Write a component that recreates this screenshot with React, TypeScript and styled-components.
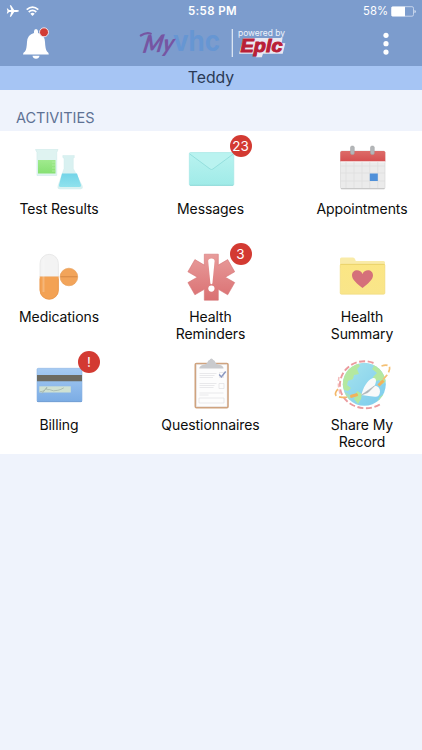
import React from 'react';
import styled, { createGlobalStyle } from 'styled-components';

const GlobalStyle = createGlobalStyle`
  * {
    box-sizing: border-box;
  }

  body {
    margin: 0;
    background: #eff3fc;
    font-family: Inter, 'Liberation Sans', sans-serif;
  }
`;

const Screen = styled.div`
  width: 100%;
  min-height: 750px;
  background: #eff3fc;
`;

const Header = styled.header`
  height: 66px;
  background: #7c9ccd;
  color: white;
`;

const StatusBar = styled.div`
  display: grid;
  grid-template-columns: 1fr auto 1fr;
  align-items: center;
  height: 22px;
  padding: 0 6px;
`;

const StatusIcons = styled.div`
  display: flex;
  align-items: center;
  gap: 6px;
`;

const Clock = styled.div`
  padding-left: 3px;
  font-size: 11.5px;
  font-weight: 600;
  letter-spacing: 0.4px;
`;

const Battery = styled.div`
  display: flex;
  align-items: center;
  justify-content: flex-end;
  gap: 3px;
  font-size: 11.3px;
`;

const NavBar = styled.div`
  display: grid;
  grid-template-columns: 116px 160px 1fr;
  align-items: center;
  height: 44px;
  padding: 0 31px 0 20px;
`;

const IconButton = styled.button`
  display: flex;
  padding: 0;
  border: 0;
  background: none;

  &:last-child {
    justify-self: end;
  }
`;

const PatientBar = styled.div`
  height: 24px;
  background: #a6c5f4;
  color: #2b3a55;
  font-size: 15.8px;
  line-height: 24px;
  text-align: center;
`;

const SectionTitle = styled.h2`
  height: 41px;
  margin: 0;
  padding: 7px 16px 0;
  color: #5e7194;
  font-size: 14.5px;
  font-weight: 400;
  line-height: 41px;
`;

const ActivityGrid = styled.div`
  display: grid;
  grid-template-columns: repeat(3, 118px);
  grid-auto-rows: 108px;
  justify-content: space-between;
  height: 323px;
  padding-right: 1px;
  background: white;
`;

const Activity = styled.div`
  position: relative;
  display: flex;
  flex-direction: column;
  align-items: center;
`;

const Label = styled.div`
  color: #0c0c0c;
  font-size: 14px;
  line-height: 17px;
  letter-spacing: -0.07px;
  text-align: center;
  white-space: pre-line;
`;

const Badge = styled.span`
  position: absolute;
  top: 4px;
  left: 78px;
  width: 22px;
  height: 22px;
  border-radius: 50%;
  background: #d33a32;
  color: white;
  font-size: 13.5px;
  line-height: 23px;
  text-align: center;
`;

const Art: React.FC<{ children: React.ReactNode }> = ({ children }) => (
  <svg width="80" height="69" viewBox="0 0 80 69" fill="none">
    {children}
  </svg>
);

const Gradient: React.FC<{ id: string; from: string; to: string }> = ({ id, from, to }) => (
  <linearGradient id={id} x1="0" y1="0" x2="0" y2="1">
    <stop stopColor={from} />
    <stop offset="1" stopColor={to} />
  </linearGradient>
);

const TestResultsArt = () => (
  <Art>
    <Gradient id="green" from="#a0ea8e" to="#86e072" />
    <Gradient id="aqua" from="#72d4e8" to="#90e2ed" />
    <path d="M16.500 18.500h22.500l-1.300 3v23H18V21.500z" fill="#dff3f1" stroke="#d3eceb" strokeWidth=".7" />
    <path d="M19 29h17.500v13.500H19z" fill="url(#green)" />
    <path d="M33 31h3M33 34h3M33 37h3M33 40h3" stroke="#b7efab" strokeWidth=".7" />
    <path d="M43.800 24.500h11.500v2l-1 1v10l9 17.500q1 3-2 3H41q-3 0-2-3l6-17.500V27.500l-1.200-1z" fill="#d9f1f1" stroke="#d0ecec" strokeWidth=".5" />
    <path d="M43 42.500h15l4 11.500q.5 2-1.500 2h-19q-2 0-1.500-2z" fill="url(#aqua)" />
  </Art>
);

const MessagesArt = () => (
  <Art>
    <Gradient id="mail" from="#b9f3f0" to="#a0ebe8" />
    <rect x="18.300" y="21.500" width="44.500" height="33" rx="1.300" fill="url(#mail)" stroke="#a0e4e3" strokeWidth=".6" />
    <path d="M18.800 23l20.300 15q1.400 1 2.800 0L62.300 23" fill="#baf3f0" stroke="#8bdbd9" strokeWidth=".8" />
    <path d="M19 54.300h43" stroke="#8ad5d6" strokeWidth=".8" />
  </Art>
);

const AppointmentsArt = () => (
  <Art>
    <Gradient id="red" from="#dc6c69" to="#d64f50" />
    <rect x="18.500" y="20" width="44.500" height="38" rx="1.500" fill="#ebebeb" stroke="#d3d3d3" strokeWidth=".6" />
    <path d="M18.300 30.500V21.500q0-1.500 1.500-1.500h42q1.500 0 1.500 1.500v9z" fill="url(#red)" />
    <path d="M18.500 30.900h44.500" stroke="#fff" strokeWidth=".8" />
    <path d="M18.500 35h44.500M18.500 42h44.500M18.500 50h44.500M24 31v26M32 31v26M40 31v26M47.700 31v26M55.700 31v26" stroke="#dcdcdc" strokeWidth=".7" />
    <path d="M19 57.600h43.500" stroke="#bdbdbd" strokeWidth=".8" />
    <rect x="47.800" y="42.500" width="8" height="7.500" fill="#4f90d9" />
    <rect x="28.500" y="15" width="3.800" height="8.500" rx="1.500" fill="#b3b6b8" stroke="#a0a3a5" strokeWidth=".5" />
    <rect x="48.500" y="15" width="3.800" height="8.500" rx="1.500" fill="#b3b6b8" stroke="#a0a3a5" strokeWidth=".5" />
  </Art>
);

const MedicationsArt = () => (
  <Art>
    <path d="M21 38V24.500a9.200 9.200 0 0 1 18.400 0V38z" fill="#f3f3f3" stroke="#e2e2e2" strokeWidth=".7" />
    <path d="M20.700 37.500h19V51a9.500 9.500 0 0 1-19 0z" fill="#f3a254" />
    <path d="M21 39.500V51a9.200 9.200 0 0 0 18.400 0V39.500" stroke="#e8974a" strokeWidth=".7" />
    <path d="M24.500 20v33" stroke="#fff" strokeWidth="2" opacity=".22" />
    <circle cx="49.900" cy="38" r="8.800" fill="#f2a45a" stroke="#e69a52" strokeWidth=".6" />
    <path d="M41.500 37.700h16.800" stroke="#dc8f4a" strokeWidth="1.300" />
  </Art>
);

const RemindersArt = () => (
  <Art>
    <linearGradient id="star" x1="0" y1="15" x2="0" y2="61" gradientUnits="userSpaceOnUse">
      <stop stopColor="#e89c9b" />
      <stop offset="1" stopColor="#da7072" />
    </linearGradient>
    <path
      d="M33.300 15.200h14v10.900l9.400-5.500 7 12.200-9.400 5.400 9.400 5.400-7 12.200-9.400-5.500v10.900h-14V50.300l-9.400 5.500-7-12.200 9.400-5.400-9.400-5.400 7-12.200 9.400 5.500z"
      fill="url(#star)"
      stroke="#d57376"
      strokeWidth=".6"
    />
    <path d="M37.200 22q0-2.500 3.200-2.500t3.200 2.500l-2.200 22.500q-1 1.500-2 0z" fill="white" />
    <circle cx="40.400" cy="49.600" r="3.100" fill="white" />
  </Art>
);

const SummaryArt = () => (
  <Art>
    <Gradient id="folder" from="#fbe684" to="#f9e58a" />
    <path d="M18 25v-5q0-1.500 1.500-1.500H31q1.500 0 2 1.500l.8 2H61.500q1.500 0 1.500 1.500V29H18z" fill="#f9eba8" />
    <rect x="18.200" y="25.200" width="44.700" height="30" rx="1.300" fill="url(#folder)" stroke="#efd978" strokeWidth=".6" />
    <path d="M18.500 25.500h44" stroke="#ecd56e" strokeWidth="1" />
    <path d="M40.500 49C35.500 45 30 41 30 36.300c0-3 2.300-5 5-5 2.500 0 4.500 1.300 5.500 3.700 1-2.400 3-3.700 5.500-3.700 2.700 0 5 2 5 5C51 41 45.500 45 40.500 49z" fill="#d5707a" />
  </Art>
);

const BillingArt = () => (
  <Art>
    <Gradient id="card" from="#a6cbf3" to="#7bace4" />
    <rect x="18" y="21.300" width="45" height="33.500" rx="1.300" fill="url(#card)" stroke="#8cb4e3" strokeWidth=".6" />
    <path d="M18 28h45v6.200H18z" fill="#6c6b62" />
    <path d="M18 54.500h45" stroke="#6d9bd2" strokeWidth=".8" />
    <rect x="20.300" y="39.300" width="31.500" height="6.200" fill="#cfe1d2" />
    <path d="M20.800 44.700q5 0 7-4.500-1 3 1 2.500t3 .3q2 1.500 7 .3 3-.5 6-2.500M23 46.500l4.500-5.500" stroke="#a5b5aa" strokeWidth=".8" />
  </Art>
);

const QuestionnairesArt = () => (
  <Art>
    <rect x="24.400" y="16.600" width="32.500" height="44" rx="1" fill="#fdfdfd" stroke="#cfa37f" strokeWidth="1.800" />
    <path d="M25.500 17.500h30.500v42H25.500z" stroke="#e6e6e8" strokeWidth=".5" />
    <path d="M28.300 21.500q0-2.500 3.500-3.500 4.500-1 5-3.500.5-1.500 1.800-1.500.5-1.500 1.800-1.500t1.800 1.500q1.300 0 1.800 1.500.5 2.500 5 3.500 3.500 1 3.500 3.500z" fill="#c9cacd" />
    <path d="M28.500 26.500h17M28.500 28.500h15M28.500 30.500h13.500M28.500 36.500h17M28.500 38.500h15M28.500 40.500h14M28.500 46h24M28.500 48h9" stroke="#e3e3e6" strokeWidth=".8" />
    <path d="M48.500 25.500h4v5h-4zM48 36.500h5v5h-5zM28 51h25v5H28z" stroke="#e0e0e3" strokeWidth=".7" />
    <path d="M48.200 27.500l2.200 2.400 4.300-5.400" stroke="#8b98c0" strokeWidth="1.500" />
  </Art>
);

const ShareArt = () => (
  <Art>
    <linearGradient id="sea" x1="0" y1="0" x2="1" y2="1">
      <stop stopColor="#a8e4ed" />
      <stop offset="1" stopColor="#7bcbed" />
    </linearGradient>
    <clipPath id="earth">
      <circle cx="42.300" cy="37.300" r="21.500" />
    </clipPath>
    <circle cx="42.300" cy="37.300" r="21.500" fill="url(#sea)" />
    <g clipPath="url(#earth)" fill="#b4e8a0">
      <path d="M20 37l3-13 12-9 3 4-3 3 2 5-5 1-1 4-5 2-1 4 4 3-3 3-4-1zM48 15l12 7 5 11-4 4-4-4-5 2-1-5 4-4-5-4 2-3zM35 44l5 3-1 5-3 5-4-5zM58 50l6-5-3 9-7 3z" />
      <path d="M23 45l5 3v5l-5-4z" opacity=".6" />
    </g>
    <path d="M51.500 16C38 10.500 23 18 19 31c-4 13 3 23 12.500 27.500 9 4 19 4 28-2" stroke="#eb9a9d" strokeWidth="1.900" strokeDasharray="6 2.600" />
    <path d="M17 30q-1.800 9 1.500 18" stroke="#f4bcbb" strokeWidth="1.500" strokeDasharray="4 2.500" />
    <path d="M59.500 19q6-2 8 .8 1 3-2.500 8.200l-6.500 7.500" stroke="#f4c074" strokeWidth="1.700" strokeDasharray="6 2.500" />
    <path d="M36 47.800q-9 3-16 2.600-6-.6-6.500-3-.5-2 2.500-5.400" stroke="#f3b767" strokeWidth="1.700" strokeDasharray="8 3" />
    <path d="M28.500 49.500l7-2M56.500 38.500l5-5" stroke="#f1b25b" strokeWidth="3" />
    <path d="M39.500 48C41 41 45 33 51 31q3-.7 3 3-.2 2.500-1.300 4.700 5.300.5 5.300 5.800-.3 5.500-5 5.200-6-.7-13.500-1.700z" fill="#f8fafa" />
    <path d="M39.500 48l13.200-9.300L46 45.500z" fill="#a9b2b6" stroke="#b0b9bc" strokeWidth=".6" />
  </Art>
);

const AirplaneIcon = () => (
  <svg width="14" height="14" viewBox="0 0 14 14" fill="white">
    <path d="M13 7q0 .8-2 .9H8.200L5 12.700H3.800L5.300 8H3L1.700 9.500H.8L1.500 7 .8 4.500h.9L3 6h2.300L3.800 1.300H5l3.200 4.800H11q2 .1 2 .9z" />
  </svg>
);

const WifiIcon = () => (
  <svg width="13" height="11" viewBox="0 0 13 11" fill="none" stroke="white" strokeWidth="1.700">
    <path d="M.7 3.700q5.800-5 11.600 0M2.700 6q3.800-3.200 7.600 0" />
    <path d="M4.300 7.700q2.200-1.700 4.400 0l-2.200 2.200z" fill="white" stroke="none" />
  </svg>
);

const BatteryIcon = () => (
  <svg width="25" height="11" viewBox="0 0 25 11">
    <rect x=".5" y=".7" width="22" height="9.500" rx="1.500" fill="none" stroke="#c4d3eb" />
    <path d="M.5 1.500q0-.8.800-.8H14v9.500H1.300q-.8 0-.8-.8z" fill="white" />
    <path d="M23.500 4q1.300 0 1.300 1.500T23.500 7z" fill="#dbe5f5" />
  </svg>
);

const BellIcon = () => (
  <svg width="31" height="34" viewBox="0 0 31 34">
    <path d="M14 4.500q0-2.500 2-2.500t2 2.500V6q6.500 1.500 7 9 .3 7.500 2 9.500 1.800 1 1.800 3H3q0-2 2-3 1.700-2 2-9.500.5-7.500 7-9z" fill="white" />
    <path d="M12.500 28.800h7q-.5 3-3.500 3t-3.500-3z" fill="white" />
    <circle cx="24" cy="5.300" r="4.500" fill="#d23c34" stroke="#f2f4fa" strokeWidth=".9" />
  </svg>
);

const MoreIcon = () => (
  <svg width="10" height="24" viewBox="0 0 10 24" fill="white">
    <circle cx="5" cy="3.300" r="2.600" />
    <circle cx="5" cy="11.700" r="2.600" />
    <circle cx="5" cy="20.100" r="2.600" />
  </svg>
);

const Logo = () => (
  <svg width="160" height="44" viewBox="0 -4 160 44">
    <text x="37" y="25" fontFamily="Inter, sans-serif" fontWeight="700" fontSize="28" textLength="47" lengthAdjust="spacingAndGlyphs" fill="#6696d3">vhc</text>
    <text transform="translate(6 27) rotate(-3) skewX(-14)" fontFamily="Lato, sans-serif" fontStyle="italic" fontWeight="900" fontSize="24" textLength="31" lengthAdjust="spacingAndGlyphs" fill="#7655a2">My</text>
    <path d="M4.800 9.500q5.500-3.500 10-1.800" fill="none" stroke="#7655a2" strokeWidth="2.200" strokeLinecap="round" />
    <path d="M96.300 3v28" stroke="#e5ecf7" strokeWidth="1.200" />
    <text x="102" y="9.500" fontFamily="Inter, sans-serif" fontSize="9" textLength="47" lengthAdjust="spacingAndGlyphs" fill="#eef3fb">powered by</text>
    <path d="M107.500 12h39l-.8 5 3.600.2-2.600 10.500H127l-1.200 3.500h-6l.8-3.500H103z" fill="#e9e9f2" strokeLinejoin="round" />
    <text x="104.500" y="26" fontFamily="'Liberation Sans', sans-serif" fontStyle="italic" fontWeight="700" fontSize="18.500" textLength="42" lengthAdjust="spacingAndGlyphs" fill="#b92037" stroke="#b92037" strokeWidth="1">Epic</text>
  </svg>
);

const activities = [
  { label: 'Test Results', art: <TestResultsArt /> },
  { label: 'Messages', art: <MessagesArt />, badge: '23' },
  { label: 'Appointments', art: <AppointmentsArt /> },
  { label: 'Medications', art: <MedicationsArt /> },
  { label: 'Health\nReminders', art: <RemindersArt />, badge: '3' },
  { label: 'Health\nSummary', art: <SummaryArt /> },
  { label: 'Billing', art: <BillingArt />, badge: '!' },
  { label: 'Questionnaires', art: <QuestionnairesArt /> },
  { label: 'Share My\nRecord', art: <ShareArt /> },
];

const App: React.FC = () => (
  <>
    <GlobalStyle />
    <Screen>
      <Header>
        <StatusBar>
          <StatusIcons>
            <AirplaneIcon />
            <WifiIcon />
          </StatusIcons>
          <Clock>5:58 PM</Clock>
          <Battery>
            58%
            <BatteryIcon />
          </Battery>
        </StatusBar>
        <NavBar>
          <IconButton aria-label="Notifications">
            <BellIcon />
          </IconButton>
          <Logo />
          <IconButton aria-label="Menu">
            <MoreIcon />
          </IconButton>
        </NavBar>
      </Header>
      <PatientBar>Teddy</PatientBar>
      <SectionTitle>ACTIVITIES</SectionTitle>
      <ActivityGrid>
        {activities.map(({ label, art, badge }) => (
          <Activity key={label}>
            {art}
            <Label>{label}</Label>
            {badge && <Badge>{badge}</Badge>}
          </Activity>
        ))}
      </ActivityGrid>
    </Screen>
  </>
);

export default App;
